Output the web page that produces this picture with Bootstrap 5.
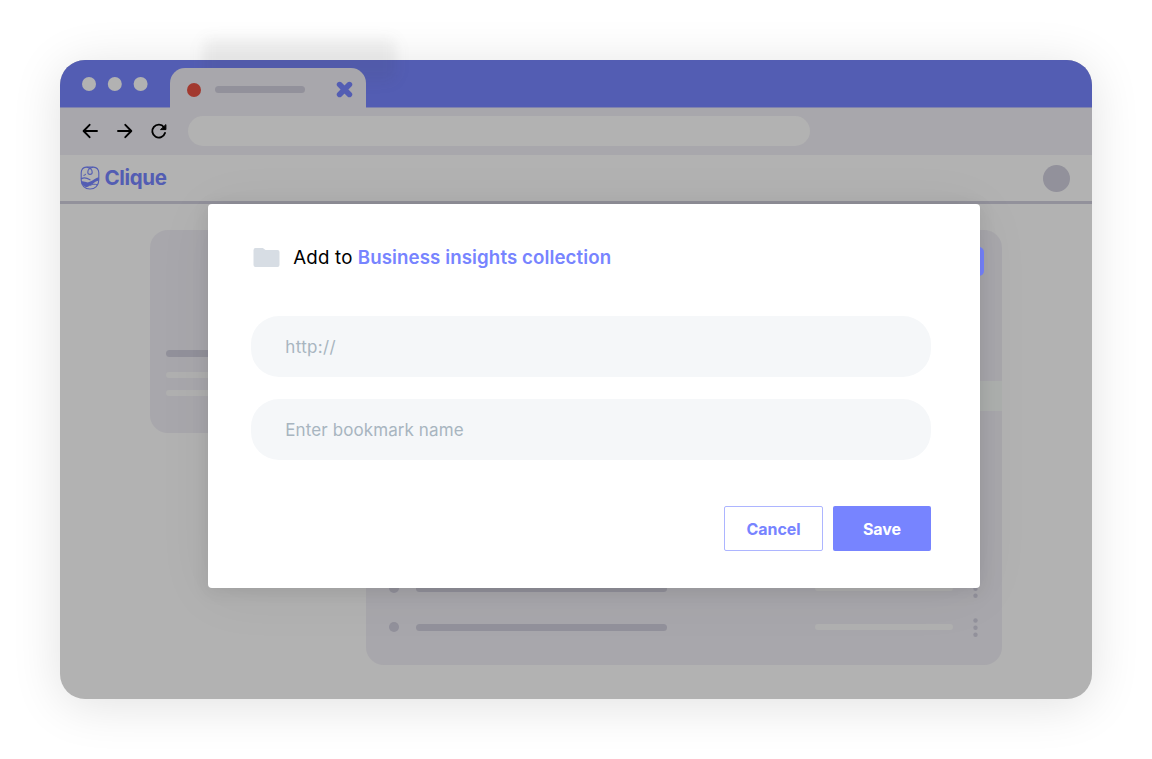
<!DOCTYPE html>
<html lang="en">
<head>
<meta charset="utf-8">
<meta name="viewport" content="width=device-width, initial-scale=1">
<title>Clique</title>
<link rel="stylesheet" href="https://cdn.jsdelivr.net/npm/bootstrap@5.3.0/dist/css/bootstrap.min.css">
<style>
  body { font-family: Inter, "Open Sans", sans-serif; font-feature-settings: "cv11"; background: #fff; }
  .stage { width: 1152px; height: 759px; padding: 60px 60px 60px; }
  .browser { width: 1031.5px; height: 638.5px; border-radius: 25px; background: #b2b2b2; box-shadow: 0 6px 50px rgba(0,0,0,.12); }
  .titlebar { height: 48px; background: #535db3; padding-left: 21.5px; border-bottom: 1px solid #8083ae; border-radius: 25px 25px 0 0; }
  .lamp-set { width: 88.5px; height: 47px; }
  .page-tab { width: 196px; height: 40px; margin-top: 8px; border-radius: 15px 15px 0 0; background: #a8a7ac; padding: 3px 13px 0 17px; z-index: 1; }
  .tab-glow { left: 143px; top: -21px; width: 193px; height: 42px; background: rgba(60,60,60,.08); filter: blur(7px); border-radius: 8px; }
  .rec { width: 14px; height: 14px; background: #a2392f; }
  .line { height: 7px; border-radius: 4px; background: #92919b; }
  .pale { background: #b0b0b0; height: 6px; }
  .toolbar { height: 47px; background: #a8a7ac; padding: 0 0 1px 21px; }
  .address { width: 622px; height: 30px; border-radius: 15px; background: #b2b2b2; margin-left: 19px; }
  .site-head { height: 49px; border-bottom: 3px solid #92919b; padding: 0 21.5px 0 20px; }
  .brand { color: #535db3; font-weight: 700; font-size: 20.5px; letter-spacing: -.35px; line-height: 1; margin-left: 4.5px; }
  .avatar { width: 27px; height: 27px; background: #92919b; margin-top: 1px; }
  .content { padding: 26px 0 0 90px; gap: 24px; }
  .panel { background: #a8a7ac; border-radius: 18px; }
  .panel-side { width: 192px; height: 202.5px; padding: 120px 16px 0; }
  .panel-main { width: 635.5px; height: 435px; padding-top: 17px; }
  .panel-main .action { width: 120px; height: 29px; border-radius: 5px; background: #7784ff; margin-right: 17.5px; }
  .band { height: 30px; margin-top: 105px; background: #adb0ae; }
  .entry { height: 39px; padding: 0 23px 0 23px; }
  .entries { padding-top: 157.5px; }
  .entry .dot { width: 10px; height: 10px; background: #92919b; margin-right: 17px; }
  .dialog-box { left: 147.6px; top: 144.4px; width: 772.4px; height: 383.4px; padding: 38.7px 49px 0 43.7px; border-radius: 4px; background: #fff; box-shadow: 0 3px 18px rgba(0,0,0,.09), 0 6px 60px rgba(0,0,0,.05); z-index: 3; }
  .dialog-title { font-size: 18.7px; line-height: 28px; color: #000; margin-left: 13px; padding-top: 1px; }
  .dialog-title .to { display: inline-block; width: 64.5px; letter-spacing: .2px; }
  .dialog-title .target { color: #7784ff; font-weight: 600; letter-spacing: .09px; }
  .field { height: 61px; border-radius: 28px; background: #f5f7f9; border: 0; font-size: 17px; color: #a4b2be; padding: 2px 34px 0; }
  .field::placeholder { color: #a8b5c0; opacity: 1; }
  .field.url-field { letter-spacing: .35px; }
  .field.name-field { letter-spacing: .1px; margin-top: 22px; }
  .act { height: 45px; border-radius: 2px; font-weight: 700; font-size: 16px; padding: 1px 0 0; letter-spacing: -.08px; }
  .act-outline { width: 99px; border: 1px solid #adb5ff; color: #7784ff; background: #fff; }
  .act-fill { width: 98px; background: #7784ff; color: #fff; border: 0; }
</style>
</head>
<body>
<div class="stage overflow-hidden">
  <main class="browser position-relative d-flex flex-column">
    <div class="titlebar d-flex flex-shrink-0 position-relative">
      <svg class="lamp-set" viewBox="0 0 88.5 47" fill="#b2b2b2"><circle cx="7" cy="24" r="7"/><circle cx="32.800" cy="24" r="7"/><circle cx="58.600" cy="24" r="7"/></svg>
      <div class="tab-glow position-absolute"></div>
      <div class="page-tab d-flex align-items-center position-relative">
        <span class="rec rounded-circle"></span>
        <span class="line" style="width:90px;margin-left:13.5px"></span>
        <svg class="ms-auto" width="17" height="17" viewBox="0 0 17 17"><path d="M3.6 3.6 13.4 13.4M13.4 3.6 3.6 13.4" stroke="#535db3" stroke-width="5.6" stroke-linecap="round"/></svg>
      </div>
    </div>
    <div class="toolbar d-flex align-items-center flex-shrink-0">
      <svg width="88" height="20" viewBox="0 0 88 20" fill="none" stroke="#000" stroke-width="1.900" stroke-linecap="round" stroke-linejoin="round">
        <path d="M16 10H3M8.600 3.800 2.600 10l6 6.200M37 10h13M44.300 3.800l6 6.200-6 6.200"/>
        <path d="M83 6.200A6.500 6.500 0 1 0 84 12"/>
        <path d="M84.900 4V8.600h-5z" fill="#000" stroke-width="1"/>
      </svg>
      <div class="address"></div>
    </div>
    <header class="site-head d-flex align-items-center flex-shrink-0">
      <svg width="20" height="24" viewBox="0 0 20 24" fill="none" stroke="#535db3" stroke-width="1.100" stroke-linecap="round">
        <path d="M6.200 1.100h7.200q5.200.3 5.400 5.700v7.300C18.800 19.700 15 23 10 23s-8.800-3.300-8.800-8.900V6.800Q1.400 1.400 6.200 1.100Z"/>
        <path d="M7 1.300C10.300 2 12.200 4.200 12.200 6.200a2.200 2.200 0 0 1-4.400 0C7.800 4.200 9.500 2 12.800 1.300"/>
        <path d="M1.400 12.700C4.300 11 6.500 11.600 10 13.800"/>
        <path d="M1.200 15.500C4 14.800 5.500 16.800 8.500 16.300 12 15.500 14 12.600 18.800 11.300v3.200C15 15 11 20.200 6.200 21.200 3.500 20.200 1.500 18 1.200 15.500Z" fill="#535db3" stroke="none"/>
        <path d="M10.500 19.200C13 17.800 15 18 17.200 18.800" stroke-width="1"/>
        <path d="M4 9.300h.1M5.200 8.500h.1" stroke-width="1.300"/>
      </svg>
      <span class="brand">Clique</span>
      <span class="avatar rounded-circle ms-auto"></span>
    </header>
    <section class="content d-flex align-items-start">
      <div class="panel panel-side">
        <div class="line"></div>
        <div class="line pale" style="margin-top:15px"></div>
        <div class="line pale" style="margin-top:11.5px"></div>
      </div>
      <div class="panel panel-main">
        <div class="action ms-auto"></div>
        <div class="band"></div>
        <div class="entries">
          <div class="entry d-flex align-items-center">
            <span class="dot rounded-circle"></span><span class="line" style="width:250.5px"></span>
            <span class="line pale" style="width:138px;margin-left:148.500px"></span>
            <svg class="ms-auto" width="7" height="20" viewBox="0 0 7 20" fill="#92919b"><circle cx="3.500" cy="3.500" r="2.200"/><circle cx="3.500" cy="10.700" r="2.200"/><circle cx="3.500" cy="17.800" r="2.200"/></svg>
          </div>
          <div class="entry d-flex align-items-center">
            <span class="dot rounded-circle"></span><span class="line" style="width:250.5px"></span>
            <span class="line pale" style="width:138px;margin-left:148.500px"></span>
            <svg class="ms-auto" width="7" height="20" viewBox="0 0 7 20" fill="#92919b"><circle cx="3.500" cy="3.500" r="2.200"/><circle cx="3.500" cy="10.700" r="2.200"/><circle cx="3.500" cy="17.800" r="2.200"/></svg>
          </div>
        </div>
      </div>
    </section>
    <div class="dialog-box position-absolute" role="dialog">
      <div class="d-flex align-items-center" style="height:28px">
        <svg width="29" height="21" viewBox="0 0 29 21"><path d="M2.500 3.300q0-2.300 2-2.300h7.300l2.700 2h12q2 0 2 2v13q0 2-2 2h-22q-2 0-2-2z" fill="#d7dde4"/></svg>
        <div class="dialog-title text-nowrap"><span class="to">Add to</span><span class="target">Business insights collection</span></div>
      </div>
      <input class="field url-field form-control" style="margin-top:44.700px" placeholder="http://" aria-label="Address">
      <input class="field name-field form-control" placeholder="Enter bookmark name" aria-label="Bookmark name">
      <div class="d-flex justify-content-end" style="gap:10px;margin-top:46px">
        <button class="btn act act-outline">Cancel</button>
        <button class="btn act act-fill">Save</button>
      </div>
    </div>
  </main>
</div>
<script src="https://cdn.jsdelivr.net/npm/bootstrap@5.3.0/dist/js/bootstrap.bundle.min.js"></script>
</body>
</html>
